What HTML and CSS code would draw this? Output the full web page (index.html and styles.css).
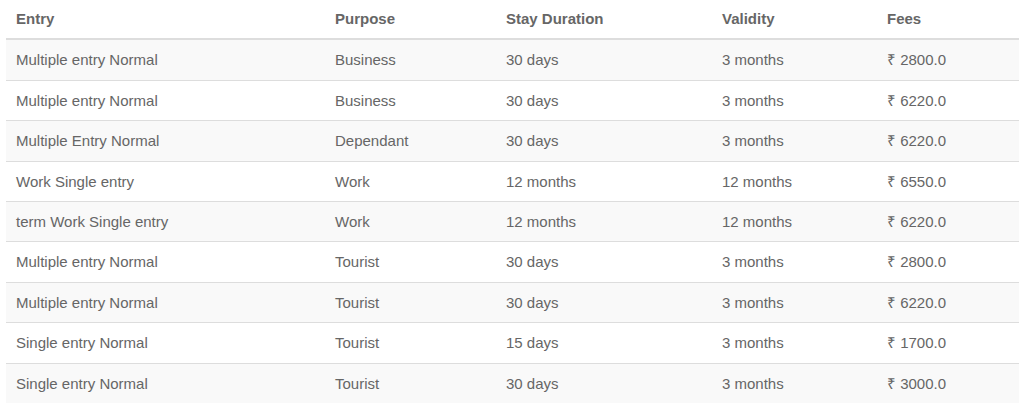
FILE: index.html
```html
<!DOCTYPE html>
<html>
<head>
<meta charset="utf-8">
<link rel="stylesheet" href="styles.css">
</head>
<body>
<table class="fees-table">
  <colgroup>
    <col class="c1"><col class="c2"><col class="c3"><col class="c4"><col class="c5">
  </colgroup>
  <thead>
    <tr><th>Entry</th><th>Purpose</th><th>Stay Duration</th><th>Validity</th><th>Fees</th></tr>
  </thead>
  <tbody>
    <tr><td>Multiple entry Normal</td><td>Business</td><td>30 days</td><td>3 months</td><td>₹ 2800.0</td></tr>
    <tr><td>Multiple entry Normal</td><td>Business</td><td>30 days</td><td>3 months</td><td>₹ 6220.0</td></tr>
    <tr><td>Multiple Entry Normal</td><td>Dependant</td><td>30 days</td><td>3 months</td><td>₹ 6220.0</td></tr>
    <tr><td>Work Single entry</td><td>Work</td><td>12 months</td><td>12 months</td><td>₹ 6550.0</td></tr>
    <tr><td>term Work Single entry</td><td>Work</td><td>12 months</td><td>12 months</td><td>₹ 6220.0</td></tr>
    <tr><td>Multiple entry Normal</td><td>Tourist</td><td>30 days</td><td>3 months</td><td>₹ 2800.0</td></tr>
    <tr><td>Multiple entry Normal</td><td>Tourist</td><td>30 days</td><td>3 months</td><td>₹ 6220.0</td></tr>
    <tr><td>Single entry Normal</td><td>Tourist</td><td>15 days</td><td>3 months</td><td>₹ 1700.0</td></tr>
    <tr><td>Single entry Normal</td><td>Tourist</td><td>30 days</td><td>3 months</td><td>₹ 3000.0</td></tr>
  </tbody>
</table>
</body>
</html>
```
FILE: styles.css
```css
html, body {
  margin: 0;
  padding: 0;
  background: #fff;
}
body {
  padding: 0 5px 0 6px;
  font-family: "Liberation Sans", Arial, sans-serif;
  font-size: 15px;
  color: #666;
}
.fees-table {
  width: 1013px;
  border-collapse: collapse;
  border-spacing: 0;
  table-layout: fixed;
}
.c1 { width: 319px; }
.c2 { width: 171px; }
.c3 { width: 216px; }
.c4 { width: 165px; }
.c5 { width: 142px; }
.fees-table th,
.fees-table td {
  padding: 9px 10px;
  line-height: 21.4px;
  text-align: left;
  vertical-align: top;
  white-space: nowrap;
}
.fees-table th {
  padding-top: 8px;
  font-weight: bold;
  color: #666;
  border-bottom: 2px solid #ddd;
}
.fees-table td {
  border-top: 1px solid #ddd;
}
.fees-table tbody tr:nth-child(odd) {
  background: #f9f9f9;
}
```
